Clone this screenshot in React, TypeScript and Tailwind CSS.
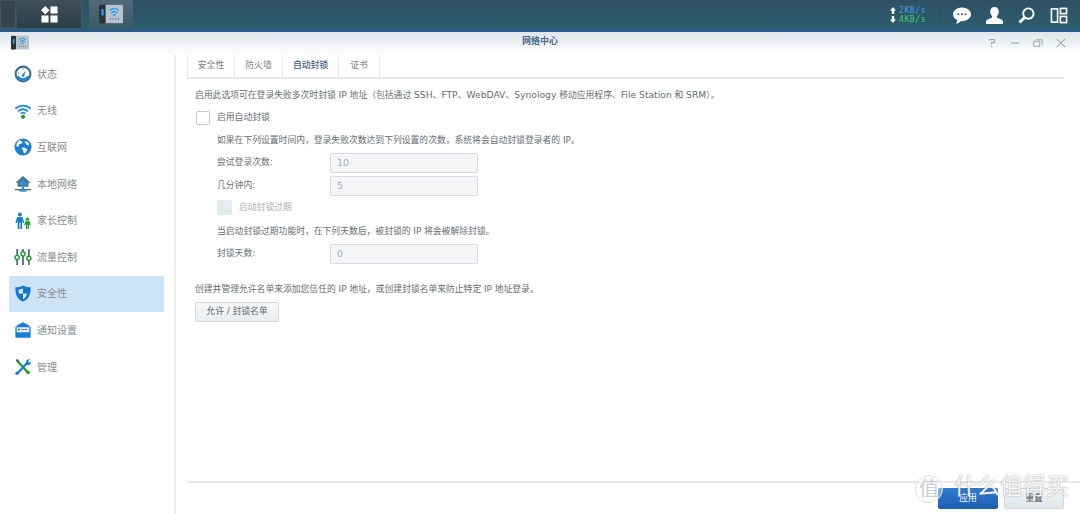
import { ReactNode } from "react";

const StatusIcon = () => (
  <svg viewBox="0 0 20 20" className="h-[18px] w-[18px]">
    <circle cx="10" cy="10" r="8.2" fill="#fff" stroke="#3f6f99" strokeWidth="2.4" />
    <path d="M3 13a8 8 0 0 0 14 0l-2-1a6 6 0 0 1-10 0z" fill="#1f87d6" />
    <path d="M8.5 11.5 13 6.5l-1.8 6.2a1.6 1.6 0 0 1-2.7-1.2z" fill="#2b7fc4" />
    <circle cx="10" cy="4.5" r=".8" fill="#6b8aa5" />
    <circle cx="5" cy="9" r=".8" fill="#6b8aa5" />
  </svg>
);

const WifiIcon = () => (
  <svg viewBox="0 0 20 20" className="h-[18px] w-[18px]" fill="none">
    <path d="M1.5 7.5c5-4.6 12-4.6 17 0" stroke="#1f8ce0" strokeWidth="2" />
    <path d="M4.5 10.5c3.400-3 7.600-3 11 0" stroke="#1f8ce0" strokeWidth="2" />
    <path d="M7.200 13c1.800-1.300 3.800-1.300 5.600 0" stroke="#1f8ce0" strokeWidth="1.800" />
    <circle cx="10" cy="16.500" r="2.300" fill="#1e9e24" />
  </svg>
);

const GlobeIcon = () => (
  <svg viewBox="0 0 20 20" className="h-[18px] w-[18px]">
    <circle cx="10" cy="10" r="9.500" fill="#1b80d2" />
    <path d="M6 2.500 9.500 4 8 6.500 5.500 7 5 10 2.500 9C2.700 6.500 4 4 6 2.500zM12 3l4 2 1 3-3-.5-1.500-2zM9 10.500l4 .5 2 2-3 4.500-1.500-2-.5-2.500-1.500-1z" fill="#fff" />
  </svg>
);

const HomeIcon = () => (
  <svg viewBox="0 0 20 20" className="h-[18px] w-[18px]">
    <path d="M10 1 1.500 8.500H4V13h12V8.500h2.500z" fill="#4d7186" />
    <path d="M6.500 8 10 5l3.500 3v3.500h-7z" fill="#2b92e0" />
    <rect x="8.700" y="13" width="2.600" height="3" fill="#2b92e0" />
    <rect x="1" y="15.500" width="18" height="1.500" fill="#4d7186" />
    <rect x="6" y="17" width="8" height="1.500" fill="#1b80d2" />
  </svg>
);

const FamilyIcon = () => (
  <svg viewBox="0 0 20 20" className="h-[18px] w-[18px]">
    <circle cx="6.500" cy="2.800" r="2.200" fill="#1b80d2" />
    <path d="M3.500 5.500h6l2 6.500-1.500.5-1-3V19H7v-7H6v7H4V9.500l-1 3-1.500-.5z" fill="#1b80d2" />
    <circle cx="15" cy="8" r="1.800" fill="#1e9e24" />
    <path d="M12.500 10.300h5l1 4.500-1.200.3-.6-2V19h-1.500v-4.500h-.6V19h-1.400v-6.200l-.6 2-1.200-.3z" fill="#1e9e24" />
  </svg>
);

const TrafficIcon = () => (
  <svg viewBox="0 0 20 20" className="h-[18px] w-[18px]" fill="none">
    <path d="M3.500 1v7M3.500 13v6M10 1v3M10 9v10M16.500 1v8M16.500 14v5" stroke="#4d6f80" strokeWidth="2" />
    <circle cx="3.500" cy="10.500" r="2.300" stroke="#1e9e24" strokeWidth="1.600" />
    <circle cx="10" cy="6.500" r="2.300" stroke="#1e9e24" strokeWidth="1.600" />
    <circle cx="16.500" cy="11.500" r="2.300" stroke="#1e9e24" strokeWidth="1.600" />
  </svg>
);

const ShieldIcon = () => (
  <svg viewBox="0 0 20 20" className="h-[19px] w-[19px]">
    <path d="M10 1c2.500 1.500 5.500 2 8.500 2 0 7.500-1.500 13-8.500 16C3 16 1.500 10.500 1.500 3 4.500 3 7.500 2.500 10 1z" fill="#1478c8" />
    <path d="M10 4.500c-1.500.7-3.300 1-5 1.200.1 1.500.2 3 .6 4.300H10zM10 10h4.400C14 13 12.500 15 10 16.300z" fill="#d7ebfa" />
  </svg>
);

const NotifyIcon = () => (
  <svg viewBox="0 0 20 20" className="h-[18px] w-[18px]">
    <path d="M10 1.500 17 5v2.500H3V5z" fill="#1b80d2" />
    <rect x="1.500" y="6.500" width="17" height="12" rx="1" fill="#1b80d2" />
    <rect x="3" y="7" width="14" height="5.500" fill="#e9f2f7" />
    <circle cx="5.500" cy="9.500" r="1.200" fill="#1e9e24" />
    <rect x="8" y="9" width="7" height="1" fill="#4d7186" />
  </svg>
);

const ToolsIcon = () => (
  <svg viewBox="0 0 20 20" className="h-[18px] w-[18px]" fill="none">
    <path d="M3 2.500 14.500 15" stroke="#1e9e24" strokeWidth="2.400" />
    <circle cx="15.500" cy="16" r="2" fill="#1e9e24" />
    <path d="M2 2l2-1 2 3-2 1.500z" fill="#3f6f80" />
    <path d="M4 17 14.500 5.500" stroke="#1b80d2" strokeWidth="2.600" />
    <path d="M13 4.500c.5-2 2.500-3.500 5-3l-2.300 2.300 1 1.500 2.300-1.500c.2 2.500-1.800 4.500-4.500 4z" fill="#1b80d2" />
    <circle cx="3.500" cy="17" r="2" fill="#1b80d2" />
  </svg>
);

const AppIcon = ({ small }: { small?: boolean }) => (
  <svg viewBox="0 0 36 24" className={small ? "h-[15px] w-[18px]" : "h-[20px] w-[24px]"} preserveAspectRatio="none">
    <rect x="0" y="1" width="10" height="22" rx="1.500" fill="#2b3238" />
    <rect x="3.500" y="6" width="3.500" height="8" rx="1.700" fill="#2f9ff0" />
    <rect x="10" y="1" width="26" height="22" fill="#b9c3c9" />
    <path d="M16 8c4-3.500 10-3.500 14 0M18.500 11c2.700-2.200 6.300-2.200 9 0M21 13.500c1.300-1 2.700-1 4 0" stroke="#2f9ff0" strokeWidth="2" fill="none" />
    <path d="M16 18h2M20 18h2M24 18h2M28 18h2" stroke="#4c88b5" strokeWidth="2" />
  </svg>
);

const menu: { label: string; icon: ReactNode; active?: boolean }[] = [
  { label: "状态", icon: <StatusIcon /> },
  { label: "无线", icon: <WifiIcon /> },
  { label: "互联网", icon: <GlobeIcon /> },
  { label: "本地网络", icon: <HomeIcon /> },
  { label: "家长控制", icon: <FamilyIcon /> },
  { label: "流量控制", icon: <TrafficIcon /> },
  { label: "安全性", icon: <ShieldIcon />, active: true },
  { label: "通知设置", icon: <NotifyIcon /> },
  { label: "管理", icon: <ToolsIcon /> },
];

const tabs = [
  { label: "安全性", w: "w-[48px]" },
  { label: "防火墙", w: "w-[48px]" },
  { label: "自动封锁", w: "w-[56px]", active: true },
  { label: "证书", w: "w-[41px]" },
];

const Field = ({ label, value }: { label: string; value: string }) => (
  <div className="flex items-center h-[20px]">
    <span className="w-[113px] text-[#6a7377]">{label}</span>
    <div className="h-[20px] w-[148px] border border-[#d5dbde] bg-[#f3f5f6] pl-[6px] text-[9.5px] text-[#a6afb4] leading-[18px] rounded-[2px]">
      {value}
    </div>
  </div>
);

export default function App() {
  return (
    <div className="relative h-[514px] w-[1080px] overflow-hidden flex flex-col bg-white font-['DejaVu_Sans','Noto_Sans_CJK_SC',sans-serif] text-[8.8px] text-[#656e72]">
      {/* taskbar */}
      <div className="h-[32px] shrink-0 flex border-b-2 border-[#2c5a8e] bg-gradient-to-b from-[#2f5063] to-[#2a5f6f]">
        <div className="w-[16px] h-[28px] mr-[1px] bg-[#33444f] border border-[#41535e]" />
        <div className="w-[65px] h-[28px] flex items-center justify-center bg-gradient-to-b from-[#3f4f59] to-[#2d3f4a] border-r border-[#46565f]">
          <svg viewBox="0 0 18 18" className="h-[17px] w-[17px]" fill="#fff">
            <path d="M4.500 0 9 4.500 4.500 9 0 4.500z" />
            <rect x="10" y="0.500" width="7.500" height="7.500" />
            <rect x="0.500" y="10" width="7.500" height="7.500" />
            <rect x="10" y="10" width="7.500" height="7.500" />
          </svg>
        </div>
        <div className="w-[44px] h-[28px] ml-[7px] flex items-center justify-center bg-gradient-to-b from-[#4f6a78] to-[#3b5a6a]">
          <AppIcon />
        </div>
        <div className="flex-1" />
        <div className="flex items-center h-[30px]">
          <svg viewBox="0 0 6 18" className="h-[18px] w-[6px] mr-[3px]" fill="#fff">
            <path d="M3 1 6 4.500H4.200V8H1.800V4.500H0zM3 17 6 13.500H4.200V10H1.800v3.500H0z" />
          </svg>
          <div className="flex flex-col w-[40px] text-[8px] leading-[9px] tracking-[0.6px] font-['DejaVu_Sans_Mono',monospace]">
            <span className="text-[#3aa0e8]">2KB/s</span>
            <span className="text-[#3fd06a]">4KB/s</span>
          </div>
          <div className="w-px h-[22px] bg-[#2c4e5e] mr-[13px]" />
          <svg viewBox="0 0 20 18" className="h-[17px] w-[18px] mr-[15px]">
            <path d="M10 0c5.500 0 10 3.400 10 7.700s-4.500 7.600-10 7.600h-1.500C7 17 5 18 3 18c1-1 1.700-2.200 1.800-3.800C2 13 0 10.500 0 7.700 0 3.400 4.500 0 10 0z" fill="#fff" />
            <circle cx="6" cy="7.500" r="1.100" fill="#2f5a6c" />
            <circle cx="10" cy="7.500" r="1.100" fill="#2f5a6c" />
            <circle cx="14" cy="7.500" r="1.100" fill="#2f5a6c" />
          </svg>
          <svg viewBox="0 0 18 18" className="h-[17px] w-[17px] mr-[15px]" fill="#fff">
            <path d="M9 0c2.800 0 4.500 2 4.500 4.800 0 2-.9 3.800-2 5v1.500c2.500.8 6.500 2 6.500 4.200V18H0v-2.500c0-2.200 4-3.400 6.500-4.200V9.800c-1.100-1.200-2-3-2-5C4.500 2 6.200 0 9 0z" />
          </svg>
          <svg viewBox="0 0 18 18" className="h-[17px] w-[17px] mr-[15px]" fill="none">
            <circle cx="11" cy="7" r="5.500" stroke="#fff" strokeWidth="2" />
            <path d="M7 11 1.500 16.500" stroke="#fff" strokeWidth="3" />
          </svg>
          <svg viewBox="0 0 18 18" className="h-[17px] w-[18px] mr-[12px]" fill="none" stroke="#fff" strokeWidth="1.700">
            <rect x="1" y="2" width="6.500" height="14" />
            <rect x="10.500" y="1.500" width="6.500" height="5.500" />
            <rect x="10.500" y="10" width="6.500" height="6.500" />
          </svg>
        </div>
      </div>

      {/* window title */}
      <div className="h-[23px] shrink-0 flex items-center bg-gradient-to-b from-[#dfe5ea] to-[#ffffff]">
        <div className="ml-[11px] mt-[-3px] flex">
          <AppIcon small />
        </div>
        <div className="flex-1 text-center text-[9px] font-bold text-[#4a6a8c] mt-[-3px] pl-[64px]">网络中心</div>
        <div className="flex items-center gap-[13px] pr-[14px] mt-[-2px]">
          <svg viewBox="0 0 12 12" className="h-[10px] w-[10px]" fill="none" stroke="#a3abaf" strokeWidth="1.400">
            <path d="M2 2h7v3.500H5.500V8M5.500 9.500v1.500" />
          </svg>
          <svg viewBox="0 0 12 12" className="h-[10px] w-[10px]" fill="none" stroke="#a3abaf" strokeWidth="1.400">
            <path d="M1 6h10" />
          </svg>
          <svg viewBox="0 0 12 12" className="h-[10px] w-[10px]" fill="none" stroke="#a3abaf" strokeWidth="1.300">
            <rect x="1" y="4" width="7" height="6" />
            <path d="M3.500 2H11v6" />
          </svg>
          <svg viewBox="0 0 12 12" className="h-[10px] w-[10px]" fill="none" stroke="#a3abaf" strokeWidth="1.400">
            <path d="m1 1 10 10M11 1 1 11" />
          </svg>
        </div>
      </div>

      <div className="flex-1 flex min-h-0">
        {/* sidebar */}
        <aside className="w-[176px] shrink-0 border-r-2 border-[#ececec] pt-[1px] pl-[9px] pr-[10px]">
          {menu.map((item) => (
            <div
              key={item.label}
              className={`h-[36.6px] flex items-center pl-[5px] rounded-[2px] ${item.active ? "bg-[#cde3f6]" : ""}`}
            >
              <span className="w-[18px] flex justify-center">{item.icon}</span>
              <span className="ml-[5px] text-[10px] text-[#858c90]">{item.label}</span>
            </div>
          ))}
        </aside>

        {/* content */}
        <main className="flex-1 min-w-0 flex flex-col pl-[11px] pr-[16px]">
          <div className="h-[24px] shrink-0 flex border-b-2 border-[#e8eaeb]">
            {tabs.map((t, i) => (
              <div
                key={t.label}
                className={`${t.w} h-[22px] flex items-center justify-center border-r border-[#e6e8e9] ${i === 0 ? "border-l" : ""} ${t.active ? "text-[#3f5f86] font-medium" : "text-[#7a8286]"}`}
              >
                {t.label}
              </div>
            ))}
          </div>
          <div className="flex-1 pl-[8px]">
            <p className="mt-[9px] h-[14px] leading-[14px]">
              启用此选项可在登录失败多次时封锁 <span className="text-[9.2px]">IP</span> 地址（包括通过 <span className="text-[9.2px]">SSH</span>、<span className="text-[9.2px]">FTP</span>、<span className="text-[9.2px]">WebDAV</span>、<span className="text-[9.2px]">Synology</span> 移动应用程序、<span className="text-[9.2px]">File Station</span> 和 <span className="text-[9.2px]">SRM</span>）。
            </p>
            <div className="mt-[9px] flex items-center h-[14px]">
              <span className="w-[14px] h-[14px] ml-px border border-[#c5ccd0] rounded-[2px] bg-white" />
              <span className="ml-[7px]">启用自动封锁</span>
            </div>
            <div className="pl-[22px]">
              <p className="mt-[8px] h-[14px] leading-[14px]">如果在下列设置时间内，登录失败次数达到下列设置的次数，系统将会自动封锁登录者的 IP。</p>
              <div className="mt-[6px]"><Field label="尝试登录次数:" value="10" /></div>
              <div className="mt-[3px]"><Field label="几分钟内:" value="5" /></div>
              <div className="mt-[4px] flex items-center h-[15px] text-[#a9b1b5]">
                <span className="w-[15px] h-[15px] rounded-[2px] bg-[#e6ebef]" />
                <span className="ml-[7px]">启动封锁过期</span>
              </div>
              <p className="mt-[9px] h-[14px] leading-[14px]">当启动封锁过期功能时，在下列天数后，被封锁的 IP 将会被解除封锁。</p>
              <div className="mt-[6px]"><Field label="封锁天数:" value="0" /></div>
            </div>
            <p className="mt-[18px] h-[14px] leading-[14px]">创建并管理允许名单来添加您信任的 IP 地址，或创建封锁名单来防止特定 IP 地址登录。</p>
            <button className="mt-[6px] block w-[84px] h-[20px] border border-[#d3d9dc] rounded-[2px] bg-gradient-to-b from-[#f7f9fa] to-[#e9eef1] text-[#5f686c]">
              允许 / 封锁名单
            </button>
          </div>
          <div className="h-[33px] shrink-0 mr-[-16px] border-t-2 border-[#e8eaeb] flex justify-end items-start pt-[5px] pr-[16px] gap-[6px]">
            <button className="w-[60px] h-[21px] rounded-[2px] bg-gradient-to-b from-[#2f7ad0] to-[#1d5fb0] text-white">应用</button>
            <button className="w-[60px] h-[21px] rounded-[2px] border border-[#d3d9dc] bg-gradient-to-b from-[#f2f5f7] to-[#dfe5e9] text-[#4b5458]">重置</button>
          </div>
        </main>
      </div>

      {/* site watermark */}
      <div className="absolute left-[915px] top-[475px] flex items-center whitespace-nowrap">
        <span className="h-[28px] w-[28px] rounded-full border border-[#dcdfe1] bg-white/40 flex items-center justify-center text-[20px] leading-none text-[#cbcfd2]">值</span>
        <span className="ml-[11px] mt-[-5px] text-[23px] leading-none text-white/90 [text-shadow:0_0_1.5px_rgba(120,120,120,.9)]">什么值得买</span>
      </div>
    </div>
  );
}
